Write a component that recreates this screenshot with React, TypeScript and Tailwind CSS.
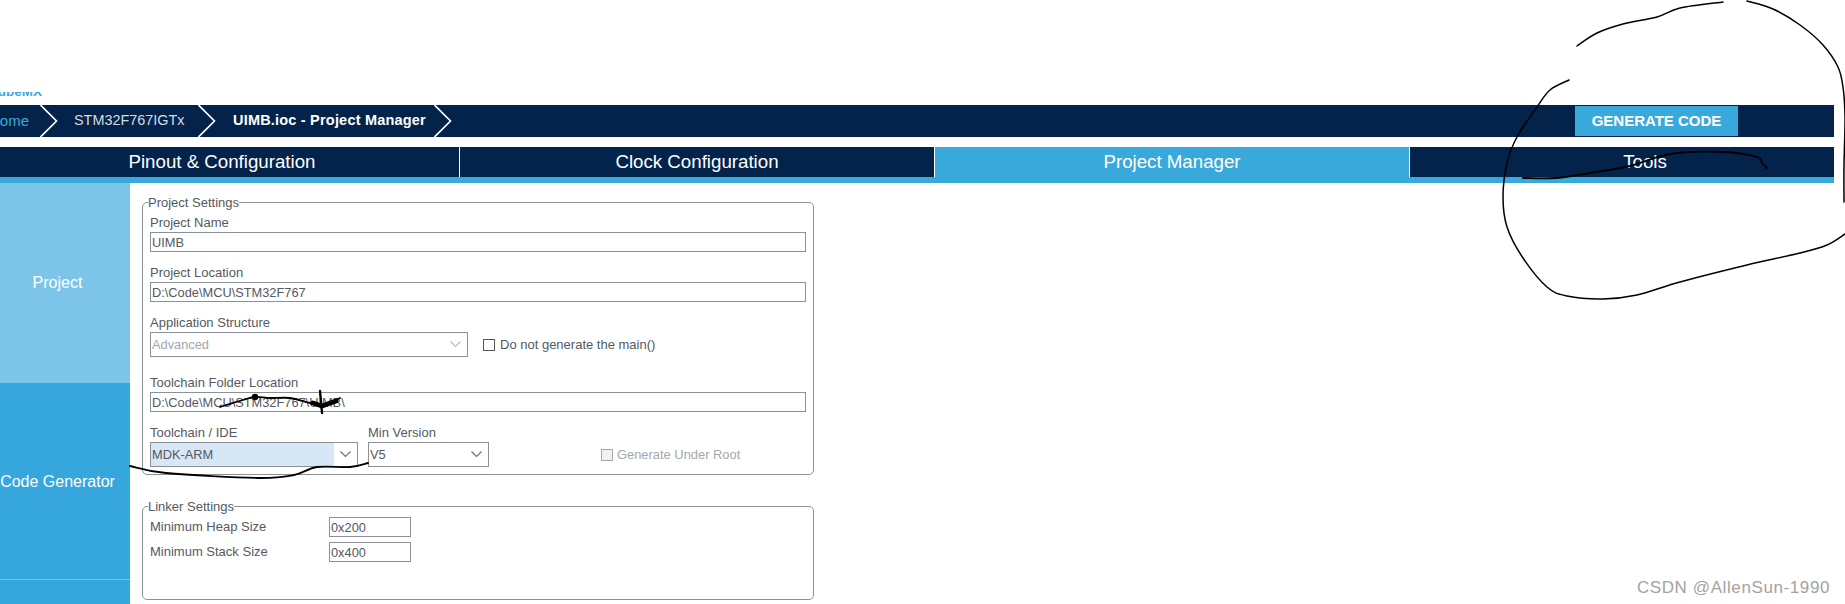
import React from "react";

type P = [number, number];

// smooth pen stroke through the given points (Catmull-Rom to Bezier)
const pen = (pts: P[]) => {
  let d = `M${pts[0][0]} ${pts[0][1]}`;
  for (let i = 0; i < pts.length - 1; i++) {
    const p0 = pts[Math.max(i - 1, 0)];
    const p1 = pts[i];
    const p2 = pts[i + 1];
    const p3 = pts[Math.min(i + 2, pts.length - 1)];
    const c1x = p1[0] + (p2[0] - p0[0]) / 6;
    const c1y = p1[1] + (p2[1] - p0[1]) / 6;
    const c2x = p2[0] - (p3[0] - p1[0]) / 6;
    const c2y = p2[1] - (p3[1] - p1[1]) / 6;
    d += ` C${c1x.toFixed(1)} ${c1y.toFixed(1)} ${c2x.toFixed(1)} ${c2y.toFixed(1)} ${p2[0]} ${p2[1]}`;
  }
  return d;
};

const Chevron = () => (
  <svg width="18" height="32" viewBox="0 0 18 32" className="shrink-0" fill="none">
    <path d="M0.5 0 L16.5 16 L0.5 32" stroke="#ffffff" strokeWidth="1.6" />
  </svg>
);

const Caret = ({ color = "#6b6f75" }: { color?: string }) => (
  <svg width="11" height="7" viewBox="0 0 11 7" fill="none">
    <path d="M0.5 0.5 L5.5 5.5 L10.5 0.5" stroke={color} strokeWidth="1.1" />
  </svg>
);

const Label = ({ children }: { children: React.ReactNode }) => (
  <div className="h-[15px] leading-[15px] text-[13px] text-[#55595f]">{children}</div>
);

const TextInput = ({ value }: { value: string }) => (
  <div className="mt-[2px] h-[20px] border border-[#8c9198] pl-[1px] text-[12.8px] leading-[19px] text-[#55595f]">{value}</div>
);

const Tab = ({ label, active = false, last = false }: { label: string; active?: boolean; last?: boolean }) => (
  <div
    className={`shrink-0 flex items-center justify-center text-[18.7px] ${last ? "w-[470px]" : "w-[475px] border-r border-white"} ${active ? "bg-[#39a9dc]" : "bg-[#03234b]"}`}
  >
    {label}
  </div>
);

export default function App() {
  return (
    <div
      className="relative w-[1845px] h-[604px] overflow-hidden bg-white"
      style={{ fontFamily: '"Liberation Sans", Arial, sans-serif' }}
    >
      {/* clipped logo */}
      <div className="h-[92px]" />
      <div className="h-[7px] overflow-hidden">
        <div className="-mt-[8px] -ml-[12px] text-[13.5px] leading-[16px] font-bold text-[#39a9dc]">CubeMX</div>
      </div>
      <div className="h-[6px]" />

      <div className="w-[1834px] overflow-hidden">
        {/* breadcrumb */}
        <div className="h-[32px] bg-[#03234b] flex items-center">
          <span className="-ml-[11px] w-[51px] shrink-0 text-[15px] text-[#39a9dc]">Home</span>
          <Chevron />
          <span className="ml-[16px] w-[124px] shrink-0 text-[14.4px] font-light text-[#d5dbe3]">STM32F767IGTx</span>
          <Chevron />
          <span className="ml-[17px] w-[201px] shrink-0 text-[14.5px] font-bold text-white tracking-[0.2px] whitespace-nowrap">UIMB.ioc - Project Manager</span>
          <Chevron />
          <button className="ml-auto mr-[96px] h-[30px] w-[163px] bg-[#39a9dc] text-white text-[15px] font-bold">
            GENERATE CODE
          </button>
        </div>

        {/* tabs */}
        <div className="mt-[10px] h-[30px] flex -ml-[15px] text-white">
          <Tab label="Pinout & Configuration" />
          <Tab label="Clock Configuration" />
          <Tab label="Project Manager" active />
          <Tab label="Tools" last />
        </div>
        <div className="h-[6px] bg-[#39a9dc]" />
      </div>

      {/* main */}
      <div className="flex h-[421px]">
        <div className="w-[145px] -ml-[15px] shrink-0 flex flex-col text-white text-[16px] bg-[#36a7dc]">
          <div className="h-[200px] flex items-center justify-center bg-[#7cc5e8]">Project</div>
          <div className="h-[197px] pt-[2px] flex items-center justify-center border-b border-[#7cc5e8]">Code Generator</div>
        </div>

        <div className="pl-[12px] pt-[12px] w-[684px]">
          <fieldset className="border border-[#8c9198] rounded-[5px] px-[7px] pb-[7px]">
            <legend className="-ml-[2px] -mb-[1px] h-[15px] text-[13px] leading-[15px] text-[#55595f]">Project Settings</legend>
            <div className="mt-[6px]">
              <Label>Project Name</Label>
              <TextInput value="UIMB" />
            </div>
            <div className="mt-[13px]">
              <Label>Project Location</Label>
              <TextInput value="D:\Code\MCU\STM32F767" />
            </div>
            <div className="mt-[13px]">
              <Label>Application Structure</Label>
              <div className="mt-[2px] flex items-center">
                <div className="w-[318px] h-[25px] border border-[#8c9198] flex items-center justify-between pl-[1px] pr-[6px] text-[12.8px] text-[#a4a7ab]">
                  Advanced
                  <Caret color="#b6b9bd" />
                </div>
                <div className="ml-[15px] w-[12px] h-[12px] border border-[#55595f]" />
                <span className="ml-[5px] text-[13px] text-[#55595f]">Do not generate the main()</span>
              </div>
            </div>
            <div className="mt-[18px]">
              <Label>Toolchain Folder Location</Label>
              <TextInput value="D:\Code\MCU\STM32F767\UIMB\" />
            </div>
            <div className="mt-[13px] flex items-end">
              <div>
                <Label>Toolchain / IDE</Label>
                <div className="mt-[2px] w-[208px] h-[25px] border border-[#8c9198] flex items-stretch text-[12.8px] text-[#55595f]">
                  <div className="w-[183px] bg-[#d7e7f5] pl-[1px] leading-[23px]">MDK-ARM</div>
                  <div className="flex-1 flex items-center justify-center"><Caret /></div>
                </div>
              </div>
              <div className="ml-[10px]">
                <Label>Min Version</Label>
                <div className="mt-[2px] w-[121px] h-[25px] border border-[#8c9198] flex items-center justify-between pl-[1px] pr-[6px] text-[12.8px] text-[#55595f]">
                  V5
                  <Caret />
                </div>
              </div>
              <div className="ml-[112px] h-[25px] flex items-center">
                <div className="w-[12px] h-[12px] border border-[#a4a7ab] bg-[#eef0f2]" />
                <span className="ml-[4px] text-[12.9px] text-[#a4a7ab]">Generate Under Root</span>
              </div>
            </div>
          </fieldset>

          <fieldset className="mt-[24px] border border-[#8c9198] rounded-[5px] px-[7px] h-[101px]">
            <legend className="-ml-[2px] -mb-[1px] h-[15px] text-[13px] leading-[15px] text-[#55595f]">Linker Settings</legend>
            <div className="mt-[4px] flex flex-col gap-[5px]">
              <div className="flex items-center">
                <span className="w-[179px] text-[13px] text-[#55595f]">Minimum Heap Size</span>
                <div className="w-[82px] h-[20px] border border-[#8c9198] pl-[1px] text-[12.8px] leading-[19px] text-[#55595f]">0x200</div>
              </div>
              <div className="flex items-center">
                <span className="w-[179px] text-[13px] text-[#55595f]">Minimum Stack Size</span>
                <div className="w-[82px] h-[20px] border border-[#8c9198] pl-[1px] text-[12.8px] leading-[19px] text-[#55595f]">0x400</div>
              </div>
            </div>
          </fieldset>
        </div>
      </div>

      {/* pen marks over the screenshot */}
      <svg className="absolute inset-0 pointer-events-none" width="1845" height="604" viewBox="0 0 1845 604" fill="none" stroke="#000" strokeLinecap="round" strokeLinejoin="round">
        <path strokeWidth="1.5" d={pen([[1577, 46], [1597, 33], [1623, 24], [1657, 17], [1680, 8], [1723, 2]])} />
        <path strokeWidth="1.5" d={pen([[1747, 1], [1773, 9], [1800, 25], [1823, 45], [1838, 67], [1843, 87], [1845, 117], [1844, 165], [1844, 202]])} />
        <path strokeWidth="1.5" d={pen([[1569, 80], [1550, 90], [1537, 107], [1517, 137], [1507, 163], [1503, 197], [1507, 227], [1523, 258], [1547, 287], [1567, 296], [1603, 299], [1637, 295], [1680, 282], [1747, 265], [1800, 253], [1827, 245], [1845, 234]])} />
        <path strokeWidth="1.8" d={pen([[1523, 178], [1557, 178], [1590, 173], [1630, 166], [1670, 154], [1723, 152], [1757, 157], [1762, 163], [1767, 168]])} />
        <path strokeWidth="1.8" d={pen([[130, 466], [166, 473], [258, 478], [294, 475], [317, 467], [350, 467], [368, 463]])} />
        <path strokeWidth="1.8" d={pen([[220, 407], [243, 400], [255, 397], [270, 398], [290, 398], [310, 403], [323, 405], [340, 398]])} />
        <circle cx="255" cy="397" r="3.2" fill="#000" stroke="none" />
        <path strokeWidth="2.4" d="M320 391 L322 413" />
        <path strokeWidth="5" d="M313 403 L322 406 L336 401" />
      </svg>

      {/* watermark */}
      <div className="absolute right-[15px] bottom-[6px] text-[17px] leading-[20px] tracking-[0.6px] text-[#a3a3a3]">CSDN @AllenSun-1990</div>
    </div>
  );
}
